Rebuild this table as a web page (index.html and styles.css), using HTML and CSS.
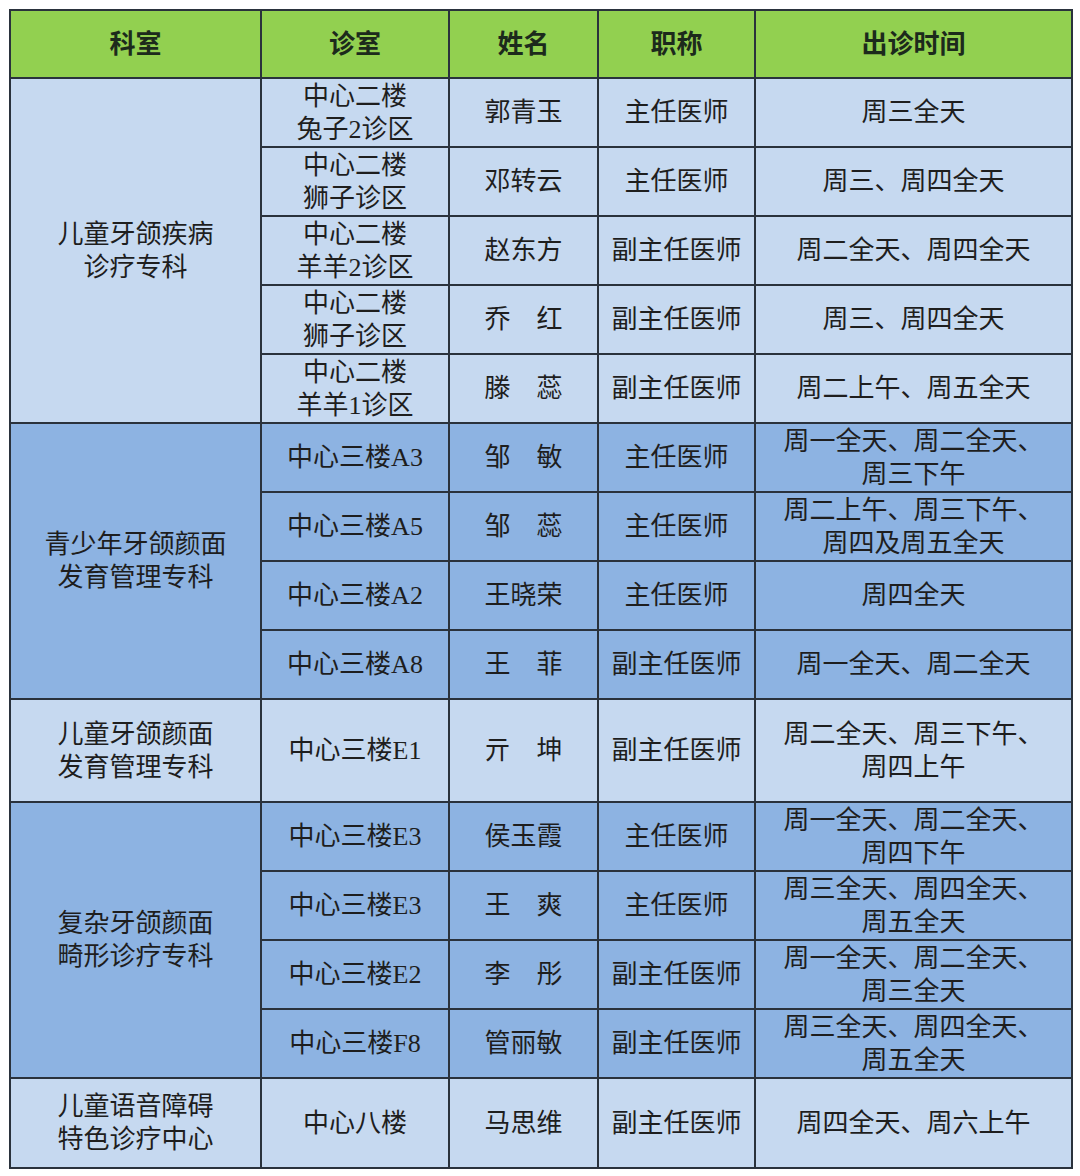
FILE: index.html
```html
<!DOCTYPE html>
<html lang="zh-CN">
<head>
<meta charset="utf-8">
<title>出诊时间表</title>
<link rel="stylesheet" href="styles.css">
</head>
<body>
<table class="schedule">
  <colgroup>
    <col class="c-dept"><col class="c-room"><col class="c-name"><col class="c-title"><col class="c-time">
  </colgroup>
  <thead>
    <tr class="head"><th>科室</th><th>诊室</th><th>姓名</th><th>职称</th><th>出诊时间</th></tr>
  </thead>
  <tbody class="light">
    <tr class="r"><td rowspan="5">儿童牙颌疾病<br>诊疗专科</td><td>中心二楼<br>兔子2诊区</td><td>郭青玉</td><td>主任医师</td><td>周三全天</td></tr>
    <tr class="r"><td>中心二楼<br>狮子诊区</td><td>邓转云</td><td>主任医师</td><td>周三、周四全天</td></tr>
    <tr class="r"><td>中心二楼<br>羊羊2诊区</td><td>赵东方</td><td>副主任医师</td><td>周二全天、周四全天</td></tr>
    <tr class="r"><td>中心二楼<br>狮子诊区</td><td>乔　红</td><td>副主任医师</td><td>周三、周四全天</td></tr>
    <tr class="r"><td>中心二楼<br>羊羊1诊区</td><td>滕　蕊</td><td>副主任医师</td><td>周二上午、周五全天</td></tr>
  </tbody>
  <tbody class="dark">
    <tr class="r"><td rowspan="4">青少年牙颌颜面<br>发育管理专科</td><td>中心三楼A3</td><td>邹　敏</td><td>主任医师</td><td>周一全天、周二全天、<br>周三下午</td></tr>
    <tr class="r"><td>中心三楼A5</td><td>邹　蕊</td><td>主任医师</td><td>周二上午、周三下午、<br>周四及周五全天</td></tr>
    <tr class="r"><td>中心三楼A2</td><td>王晓荣</td><td>主任医师</td><td>周四全天</td></tr>
    <tr class="r"><td>中心三楼A8</td><td>王　菲</td><td>副主任医师</td><td>周一全天、周二全天</td></tr>
  </tbody>
  <tbody class="light">
    <tr class="r-e1"><td>儿童牙颌颜面<br>发育管理专科</td><td>中心三楼E1</td><td>亓　坤</td><td>副主任医师</td><td>周二全天、周三下午、<br>周四上午</td></tr>
  </tbody>
  <tbody class="dark">
    <tr class="r"><td rowspan="4">复杂牙颌颜面<br>畸形诊疗专科</td><td>中心三楼E3</td><td>侯玉霞</td><td>主任医师</td><td>周一全天、周二全天、<br>周四下午</td></tr>
    <tr class="r"><td>中心三楼E3</td><td>王　爽</td><td>主任医师</td><td>周三全天、周四全天、<br>周五全天</td></tr>
    <tr class="r"><td>中心三楼E2</td><td>李　彤</td><td>副主任医师</td><td>周一全天、周二全天、<br>周三全天</td></tr>
    <tr class="r"><td>中心三楼F8</td><td>管丽敏</td><td>副主任医师</td><td>周三全天、周四全天、<br>周五全天</td></tr>
  </tbody>
  <tbody class="light">
    <tr class="r-last"><td>儿童语音障碍<br>特色诊疗中心</td><td>中心八楼</td><td>马思维</td><td>副主任医师</td><td>周四全天、周六上午</td></tr>
  </tbody>
</table>
</body>
</html>
```

FILE: styles.css
```css
html, body {
  margin: 0;
  padding: 0;
  background: #ffffff;
}

body {
  padding: 9px;
  font-family: "Liberation Serif", "Noto Sans CJK SC", serif;
  color: #1e1e1e;
}

.schedule {
  width: 1062px;
  table-layout: fixed;
  border-collapse: collapse;
  border: 2px solid #2a323c;
}

.c-dept { width: 251px; }
.c-room { width: 188px; }
.c-name { width: 149px; }
.c-title { width: 157px; }
.c-time { width: 317px; }

.schedule th,
.schedule td {
  border: 2px solid #2a323c;
  padding: 0;
  text-align: center;
  vertical-align: middle;
  font-size: 26px;
  line-height: 33px;
  font-weight: 400;
}

.head th {
  background: #92d050;
  height: 66px;
  font-weight: 700;
  font-size: 26px;
  color: #1c2a1c;
}

.light td { background: #c6d9f0; }
.dark td { background: #8db3e2; }

.r td { height: 67px; }
.r-e1 td { height: 101px; }
.r-last td { height: 88px; }
```
